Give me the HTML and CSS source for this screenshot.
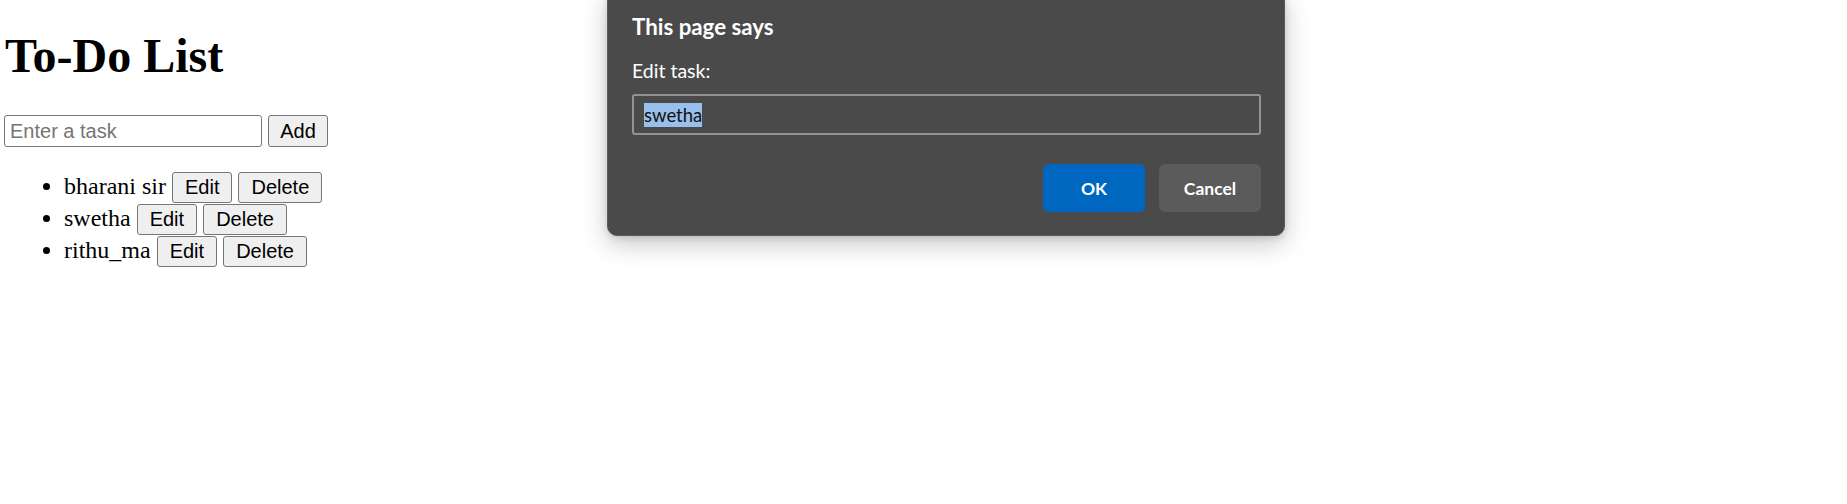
FILE: index.html
```html
<!DOCTYPE html>
<html lang="en">
<head>
<meta charset="utf-8">
<title>To-Do List</title>
<link rel="stylesheet" href="styles.css">
</head>
<body>
<main class="page">
  <h1 class="title">To-Do List</h1>
  <div class="add-row">
    <input class="task-input" type="text" placeholder="Enter a task">
    <button class="btn">Add</button>
  </div>
  <ul class="task-list">
    <li class="task">bharani sir <button class="btn">Edit</button> <button class="btn">Delete</button></li>
    <li class="task">swetha <button class="btn">Edit</button> <button class="btn">Delete</button></li>
    <li class="task">rithu_ma <button class="btn">Edit</button> <button class="btn">Delete</button></li>
  </ul>
</main>
<div class="dialog" role="dialog">
  <div class="dialog-title">This page says</div>
  <div class="dialog-label">Edit task:</div>
  <div class="dialog-field"><span class="selected">swetha</span></div>
  <div class="dialog-actions">
    <button class="dbtn dbtn-ok">OK</button>
    <button class="dbtn dbtn-cancel">Cancel</button>
  </div>
</div>
</body>
</html>
```

FILE: styles.css
```css
html, body {
  margin: 0;
  padding: 0;
  background: #ffffff;
}

body {
  font-family: "Liberation Serif", "Times New Roman", serif;
  font-size: 24px;
  color: #000;
  position: relative;
  min-height: 504px;
}

.page {
  padding: 0 4px;
}

.title {
  font-size: 48px;
  font-weight: 700;
  line-height: 55px;
  margin: 28px 0 32px;
  padding-left: 1px;
}

.add-row {
  display: flex;
  align-items: flex-start;
  gap: 6px;
  height: 33px;
}

.task-input {
  box-sizing: border-box;
  width: 258px;
  height: 32px;
  margin: 0;
  padding: 0 5px;
  border: 1px solid #767676;
  border-radius: 3px;
  font-family: "Liberation Sans", Arial, sans-serif;
  font-size: 20px;
  color: #000;
  background: #fff;
  outline: none;
}

.task-input::placeholder {
  color: #757575;
}

.btn {
  box-sizing: border-box;
  height: 31px;
  margin: 0;
  padding: 0 12px;
  border: 1px solid #767676;
  border-radius: 3px;
  background: #efefef;
  font-family: "Liberation Sans", Arial, sans-serif;
  font-size: 20px;
  line-height: 29px;
  color: #000;
  vertical-align: baseline;
}

.add-row .btn {
  width: 60px;
  height: 32px;
  padding: 0;
}

.task-list {
  margin: 24px 0 0;
  padding-left: 60px;
}

.task {
  line-height: 27px;
  height: 32px;
}

/* Dialog */
.dialog {
  position: absolute;
  left: 607px;
  top: -10px;
  width: 678px;
  box-sizing: border-box;
  padding: 22px 23px 23px 24px;
  background: #4a4a4a;
  border: 1px solid #5c5c5c;
  border-radius: 10px;
  box-shadow: 0 8px 26px rgba(0, 0, 0, 0.22), 0 2px 6px rgba(0, 0, 0, 0.12);
  font-family: Lato, "Open Sans", sans-serif;
  color: #ffffff;
  display: flex;
  flex-direction: column;
}

.dialog-title {
  font-size: 22.3px;
  font-weight: 700;
  line-height: 28px;
  margin-bottom: 17px;
}

.dialog-label {
  font-size: 19.5px;
  line-height: 26px;
  margin-bottom: 10px;
}

.dialog-field {
  box-sizing: border-box;
  height: 41px;
  border: 2px solid #8f9398;
  border-radius: 3px;
  padding: 0 10px;
  display: flex;
  align-items: center;
}

.selected {
  background: #99bfec;
  color: #111;
  font-size: 18.5px;
  line-height: 24px;
}

.dialog-actions {
  margin-top: 29px;
  display: flex;
  justify-content: flex-end;
  gap: 14px;
}

.dbtn {
  width: 102px;
  height: 48px;
  border: none;
  border-radius: 6px;
  font-family: Lato, "Open Sans", sans-serif;
  font-size: 17.5px;
  font-weight: 700;
  color: #fff;
  padding: 0;
}

.dbtn-ok {
  background: #0067c0;
}

.dbtn-cancel {
  background: #5b5b5b;
}
```
